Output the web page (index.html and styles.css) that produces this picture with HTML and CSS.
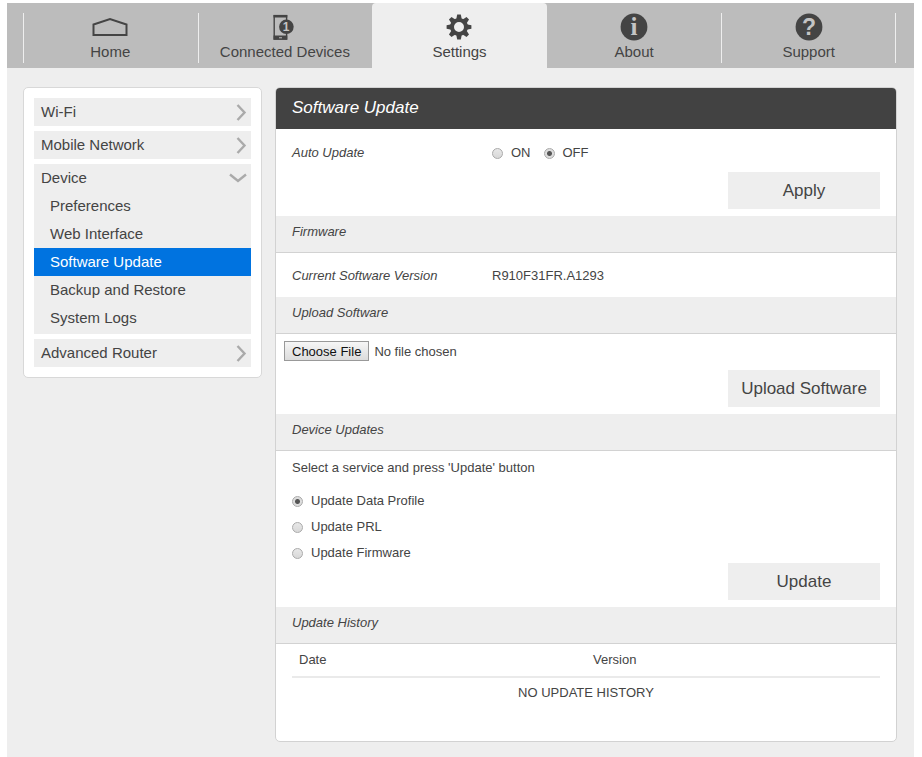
FILE: index.html
```html
<!DOCTYPE html>
<html lang="en">
  <head>
    <meta charset="UTF-8" />
    <meta name="viewport" content="width=device-width, initial-scale=1.0" />
    <title>Software Update</title>
    <link rel="stylesheet" href="styles.css">
  </head>
  <body>
    <div class="page">
      <nav class="topnav">
        <a href="#" class="tab divider">
          <svg class="tab-icon" viewBox="0 0 40 28">
            <path d="M3.5 22V11.5L20 6L36.5 11.5V22Z" fill="none" stroke="#444" stroke-width="2" />
          </svg>
          Home
        </a>
        <a href="#" class="tab divider">
          <svg class="tab-icon" viewBox="0 0 40 28">
            <rect x="9.2" y="2.6" width="12.4" height="23.4" fill="none" stroke="#444" stroke-width="1.4" />
            <path d="M8.5 2h13.8v2.6H8.5zM8.5 22.5h13.8v4.2H8.5z" fill="#444" />
            <rect x="14" y="24" width="3" height="1.4" fill="#999" />
            <circle cx="21.4" cy="13.8" r="7.3" fill="#444" />
            <text x="21.2" y="18" class="badge-digit">1</text>
          </svg>
          Connected Devices
        </a>
        <a href="#" class="tab active">
          <svg class="tab-icon" viewBox="0 0 40 28">
            <g fill="#444">
              <path id="tooth" d="M17.2 6.5L18.2 1.6H21.8L22.8 6.5Z" />
              <use href="#tooth" transform="rotate(45 20 14)" />
              <use href="#tooth" transform="rotate(90 20 14)" />
              <use href="#tooth" transform="rotate(135 20 14)" />
              <use href="#tooth" transform="rotate(180 20 14)" />
              <use href="#tooth" transform="rotate(225 20 14)" />
              <use href="#tooth" transform="rotate(270 20 14)" />
              <use href="#tooth" transform="rotate(315 20 14)" />
            </g>
            <circle cx="20" cy="14" r="7" fill="none" stroke="#444" stroke-width="4" />
          </svg>
          Settings
        </a>
        <a href="#" class="tab">
          <svg class="tab-icon" viewBox="0 0 40 28">
            <circle cx="20" cy="14" r="13.4" fill="#444" />
            <text x="20" y="22" class="info-mark">i</text>
          </svg>
          About
        </a>
        <a href="#" class="tab divider">
          <svg class="tab-icon" viewBox="0 0 40 28">
            <circle cx="20" cy="14" r="13.4" fill="#444" />
            <text x="20" y="22" class="help-mark">?</text>
          </svg>
          Support
        </a>
      </nav>

      <div class="content">
        <aside class="sidebar">
          <a href="#" class="menu-item">
            Wi-Fi
            <svg class="arrow" viewBox="0 0 18 18"><path d="M8.5 2L15.5 9.5L8.5 17" /></svg>
          </a>
          <a href="#" class="menu-item">
            Mobile Network
            <svg class="arrow" viewBox="0 0 18 18"><path d="M8.5 2L15.5 9.5L8.5 17" /></svg>
          </a>
          <div class="menu-group">
            <a href="#" class="menu-item">
              Device
              <svg class="arrow" viewBox="0 0 18 18"><path d="M1 5.5L9 12L17 5.5" /></svg>
            </a>
            <a href="#" class="submenu-item">Preferences</a>
            <a href="#" class="submenu-item">Web Interface</a>
            <a href="#" class="submenu-item selected">Software Update</a>
            <a href="#" class="submenu-item">Backup and Restore</a>
            <a href="#" class="submenu-item">System Logs</a>
          </div>
          <a href="#" class="menu-item">
            Advanced Router
            <svg class="arrow" viewBox="0 0 18 18"><path d="M8.5 2L15.5 9.5L8.5 17" /></svg>
          </a>
        </aside>

        <main class="panel">
          <h1>Software Update</h1>
          <form class="section auto-update">
            <div class="row">
              <span class="name">Auto Update</span>
              <label class="radio"><input type="radio" name="auto" /> ON</label>
              <label class="radio"><input type="radio" name="auto" checked /> OFF</label>
            </div>
            <button type="button" class="button">Apply</button>
          </form>

          <h2>Firmware</h2>
          <div class="section firmware">
            <div class="row">
              <span class="name">Current Software Version</span>
              <span>R910F31FR.A1293</span>
            </div>
          </div>

          <h2>Upload Software</h2>
          <form class="section upload">
            <input type="file" class="file" aria-label="Upload Software" />
            <button type="button" class="button">Upload Software</button>
          </form>

          <h2>Device Updates</h2>
          <form class="section device-updates">
            <p>Select a service and press 'Update' button</p>
            <div class="services">
              <label class="radio"><input type="radio" name="service" checked /> Update Data Profile</label>
              <label class="radio"><input type="radio" name="service" /> Update PRL</label>
              <label class="radio"><input type="radio" name="service" /> Update Firmware</label>
            </div>
            <button type="button" class="button">Update</button>
          </form>

          <h2>Update History</h2>
          <div class="section history">
            <table>
              <thead>
                <tr>
                  <th>Date</th>
                  <th>Version</th>
                </tr>
              </thead>
              <tbody>
                <tr>
                  <td colspan="2">NO UPDATE HISTORY</td>
                </tr>
              </tbody>
            </table>
          </div>
        </main>
      </div>
    </div>
  </body>
</html>
```

FILE: styles.css
```css
* {
  box-sizing: border-box;
}

body {
  margin: 0;
  padding: 3px 8px 0 7px;
  background: #fff;
  color: #444;
  font-family: "Liberation Sans", Arial, sans-serif;
  font-size: 13px;
  line-height: 20px;
}

a {
  color: inherit;
  text-decoration: none;
}

.page {
  min-height: calc(100vh - 3px);
  background: #eee;
}

/* top navigation */
.topnav {
  display: flex;
  padding: 0 18px 0 16px;
  background: linear-gradient(#eee, #eee) right 18px top 10px / 1px 50px no-repeat #bcbcbc;
}

.tab {
  flex: 1;
  display: flex;
  flex-direction: column;
  align-items: center;
  gap: 1px;
  height: 65px;
  padding-top: 10px;
  font-size: 15px;
}

.divider {
  background: linear-gradient(#eee, #eee) left 10px / 1px 50px no-repeat;
}

.tab.active {
  background: #eee;
  border-radius: 4px 4px 0 0;
}

.tab-icon {
  width: 40px;
  height: 28px;
}

.badge-digit,
.info-mark,
.help-mark {
  fill: #c4c4c4;
  font-weight: bold;
  text-anchor: middle;
}

.badge-digit {
  font-size: 12px;
}

.info-mark {
  font-family: "Liberation Serif", serif;
  font-size: 25px;
}

.help-mark {
  font-size: 23px;
}

.content {
  display: flex;
  align-items: flex-start;
  gap: 13px;
  padding: 19px 17px 14px 16px;
}

/* sidebar */
.sidebar {
  flex: 0 0 239px;
  display: flex;
  flex-direction: column;
  gap: 5px;
  padding: 10px;
  background: #fff;
  border: 1px solid #d8d8d8;
  border-radius: 5px;
  font-size: 15px;
}

.menu-item {
  display: flex;
  align-items: center;
  justify-content: space-between;
  height: 28px;
  padding: 0 4px 0 7px;
  background: #eee;
}

.menu-group {
  padding-bottom: 2px;
  background: #eee;
}

.submenu-item {
  display: block;
  padding-left: 16px;
  line-height: 28px;
}

.submenu-item.selected {
  background: #0073e0;
  color: #fff;
}

.arrow {
  width: 18px;
  height: 18px;
  fill: none;
  stroke: #aaa;
  stroke-width: 2.4;
}

/* main panel */
.panel {
  flex: 1;
  overflow: hidden;
  background: #fff;
  border: 1px solid #d2d2d2;
  border-radius: 5px;
}

h1 {
  margin: 0;
  padding: 10px 16px 11px;
  background: #424242;
  color: #fff;
  font-size: 17px;
  font-weight: normal;
  font-style: italic;
}

h2 {
  margin: 0;
  padding: 6px 16px 10px;
  background: #eee;
  border-bottom: 1px solid #d2d2d2;
  font-size: 13px;
  font-weight: normal;
  font-style: italic;
}

.section {
  display: flex;
  flex-direction: column;
  padding: 7px 16px;
}

.row {
  display: flex;
}

.name {
  width: 200px;
  font-style: italic;
}

.auto-update {
  gap: 9px;
  padding-top: 14px;
}

.firmware {
  padding-top: 13px;
  padding-bottom: 11px;
}

.upload {
  gap: 9px;
  padding-left: 8px;
}

.radio {
  display: flex;
  align-items: center;
  gap: 8px;
  margin-right: 13px;
}

.radio input {
  appearance: none;
  width: 11px;
  height: 11px;
  margin: 0;
  border: 1px solid #aaa;
  border-radius: 50%;
  background: linear-gradient(#e8e8e8, #d8d8d8);
}

.radio input:checked {
  background: radial-gradient(circle, #555 2px, #ddd 3px);
}

.file {
  height: 20px;
  font: inherit;
  color: inherit;
}

.file::file-selector-button {
  height: 20px;
  margin: 0 5px 0 0;
  padding: 0 7px;
  border: 1px solid #999;
  background: linear-gradient(#f6f6f6, #dcdcdc);
  color: #111;
  font: inherit;
}

.button {
  align-self: flex-end;
  min-width: 152px;
  height: 37px;
  padding: 0 13px;
  border: none;
  background: #eee;
  color: #444;
  font-family: inherit;
  font-size: 17px;
}

p {
  margin: 0 0 13px;
}

.services {
  display: flex;
  flex-direction: column;
  gap: 6px;
}

.history {
  padding-top: 0;
  padding-bottom: 33px;
}

table {
  width: 100%;
  border-collapse: collapse;
  table-layout: fixed;
}

th {
  padding: 6px 7px;
  border-bottom: 2px solid #eaeaea;
  font-weight: normal;
  text-align: left;
}

td {
  padding: 5px 7px;
  text-align: center;
}
```
